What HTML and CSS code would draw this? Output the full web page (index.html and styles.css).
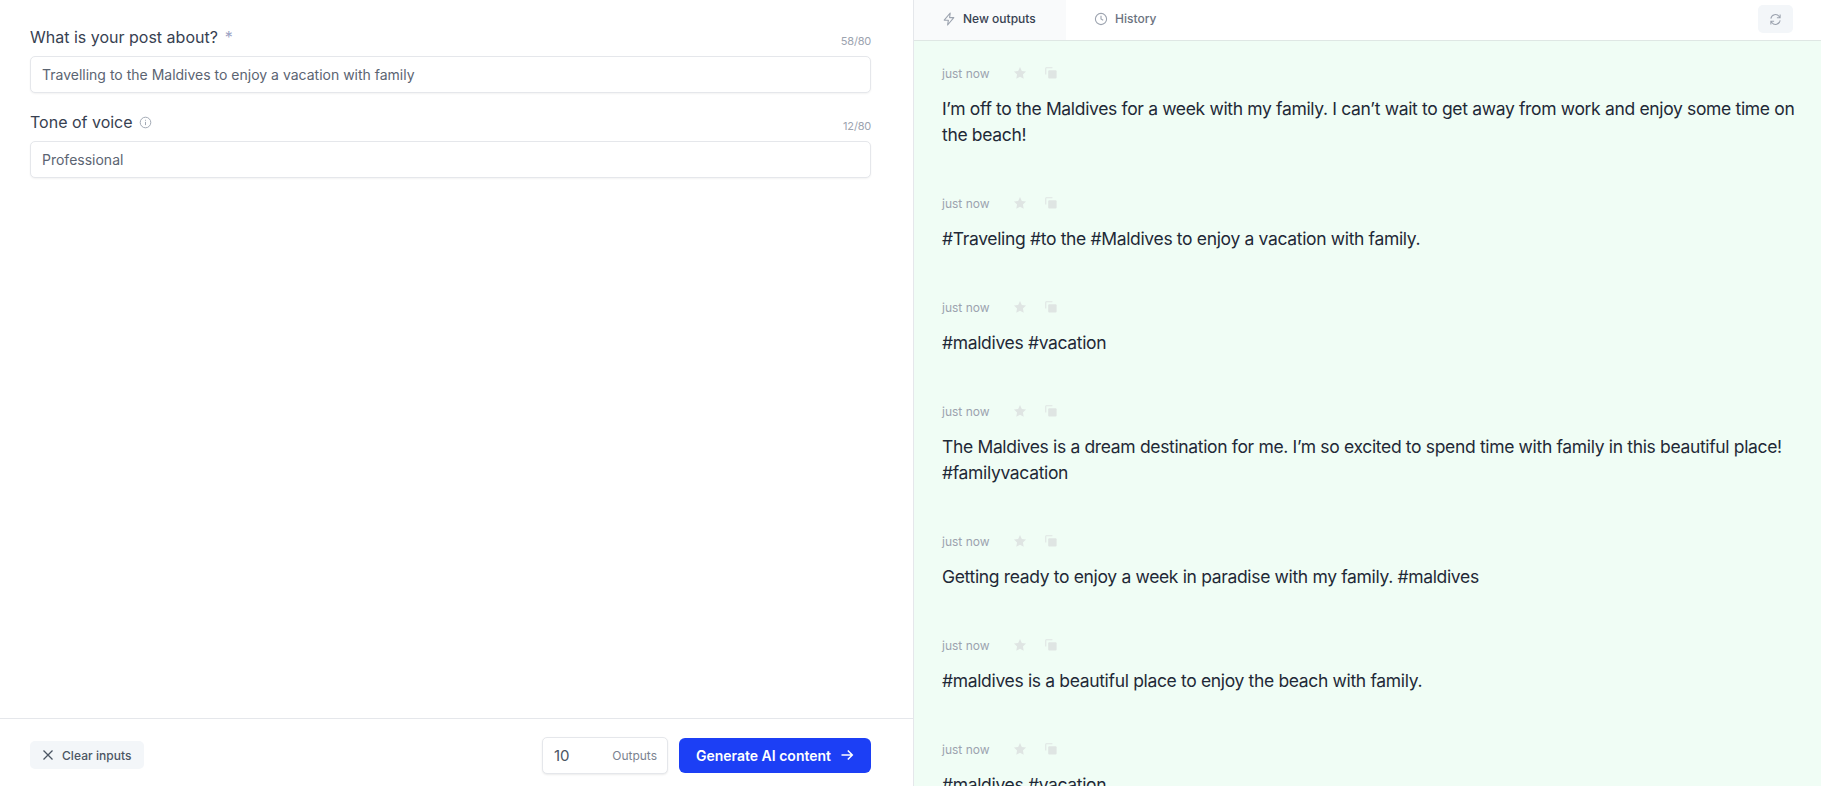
FILE: index.html
```html
<!DOCTYPE html>
<html>
<head>
<meta name="viewport" content="width=device-width, initial-scale=1">
<title>Post generator</title>
<link rel="stylesheet" href="styles.css">
</head>
<body>

<svg class="icon-defs" width="0" height="0" xmlns="http://www.w3.org/2000/svg">
  <symbol id="star" viewBox="0 0 20 20">
    <path d="M10 1.600l2.600 5.500 6 .8-4.400 4.200 1.100 6L10 15.200l-5.300 2.900 1.100-6L1.400 7.900l6-.8z" fill="currentColor"/>
  </symbol>
  <symbol id="copy" viewBox="0 0 20 20">
    <path d="M2.500 12V3.500a1 1 0 0 1 1-1H12" fill="none" stroke="currentColor" stroke-width="1.500"/>
    <rect x="6" y="6" width="12" height="12" rx="1.500" fill="currentColor"/>
  </symbol>
</svg>

<main class="page">

  <section class="editor">
    <div class="fields">
      <div class="field">
        <div class="field__head">
          <label class="field__label">What is your post about? <span class="field__req">*</span></label>
          <span class="field__count">58/80</span>
        </div>
        <input class="field__input" type="text" value="Travelling to the Maldives to enjoy a vacation with family">
      </div>
      <div class="field">
        <div class="field__head">
          <label class="field__label">Tone of voice
            <svg class="field__info" viewBox="0 0 14 14" width="13" height="13" xmlns="http://www.w3.org/2000/svg">
              <circle cx="7" cy="7" r="5.700" fill="none" stroke="currentColor" stroke-width="1"/>
              <path d="M7 6.300v3.500M7 4.100v1" fill="none" stroke="currentColor" stroke-width="1"/>
            </svg>
          </label>
          <span class="field__count">12/80</span>
        </div>
        <input class="field__input" type="text" value="Professional">
      </div>
    </div>

    <footer class="actions">
      <button class="btn-clear" type="button">
        <svg viewBox="0 0 12 12" width="12" height="12" xmlns="http://www.w3.org/2000/svg">
          <path d="M1.500 1.500l9 9M10.500 1.500l-9 9" fill="none" stroke="currentColor" stroke-width="1.300"/>
        </svg>
        Clear inputs
      </button>
      <div class="actions__right">
        <div class="outputs">
          <span class="outputs__num">10</span>
          <span class="outputs__label">Outputs</span>
        </div>
        <button class="btn-generate" type="button">
          Generate AI content
          <svg viewBox="0 0 14 14" width="14" height="14" xmlns="http://www.w3.org/2000/svg">
            <path d="M1.500 7h10.500M7.800 2.500L12.300 7l-4.500 4.500" fill="none" stroke="currentColor" stroke-width="1.500"/>
          </svg>
        </button>
      </div>
    </footer>
  </section>

  <section class="results">
    <header class="tabs">
      <div class="tab tab--active">
        <svg viewBox="0 0 14 14" width="14" height="14" xmlns="http://www.w3.org/2000/svg">
          <path d="M8.200 1L2.200 8.200h4.200L5.600 13l6.200-7.400H7.600z" fill="none" stroke="currentColor" stroke-width="1.100" stroke-linejoin="round"/>
        </svg>
        New outputs
      </div>
      <div class="tab">
        <svg viewBox="0 0 14 14" width="14" height="14" xmlns="http://www.w3.org/2000/svg">
          <circle cx="7" cy="7" r="5.600" fill="none" stroke="currentColor" stroke-width="1.100"/>
          <path d="M7 3.700V7l2.200 1.300" fill="none" stroke="currentColor" stroke-width="1.100"/>
        </svg>
        History
      </div>
      <button class="btn-refresh" type="button">
        <svg viewBox="0 0 14 14" width="13" height="13" xmlns="http://www.w3.org/2000/svg">
          <path d="M2 6a5 5 0 0 1 9-2.200l1 1.200M12 8a5 5 0 0 1-9 2.200L2 9M12 1.500V5H8.500M2 12.500V9h3.500" fill="none" stroke="currentColor" stroke-width="1.100"/>
        </svg>
      </button>
    </header>

    <div class="list">
      <article class="output">
        <div class="output__meta"><span class="output__time">just now</span><svg class="output__icon"><use href="#star"/></svg><svg class="output__icon"><use href="#copy"/></svg></div>
        <p class="output__text">I’m off to the Maldives for a week with my family. I can’t wait to get away from work and enjoy some time on the beach!</p>
      </article>
      <article class="output">
        <div class="output__meta"><span class="output__time">just now</span><svg class="output__icon"><use href="#star"/></svg><svg class="output__icon"><use href="#copy"/></svg></div>
        <p class="output__text">#Traveling #to the #Maldives to enjoy a vacation with family.</p>
      </article>
      <article class="output">
        <div class="output__meta"><span class="output__time">just now</span><svg class="output__icon"><use href="#star"/></svg><svg class="output__icon"><use href="#copy"/></svg></div>
        <p class="output__text">#maldives #vacation</p>
      </article>
      <article class="output">
        <div class="output__meta"><span class="output__time">just now</span><svg class="output__icon"><use href="#star"/></svg><svg class="output__icon"><use href="#copy"/></svg></div>
        <p class="output__text">The Maldives is a dream destination for me. I’m so excited to spend time with family in this beautiful place! #familyvacation</p>
      </article>
      <article class="output">
        <div class="output__meta"><span class="output__time">just now</span><svg class="output__icon"><use href="#star"/></svg><svg class="output__icon"><use href="#copy"/></svg></div>
        <p class="output__text">Getting ready to enjoy a week in paradise with my family. #maldives</p>
      </article>
      <article class="output">
        <div class="output__meta"><span class="output__time">just now</span><svg class="output__icon"><use href="#star"/></svg><svg class="output__icon"><use href="#copy"/></svg></div>
        <p class="output__text">#maldives is a beautiful place to enjoy the beach with family.</p>
      </article>
      <article class="output">
        <div class="output__meta"><span class="output__time">just now</span><svg class="output__icon"><use href="#star"/></svg><svg class="output__icon"><use href="#copy"/></svg></div>
        <p class="output__text">#maldives #vacation</p>
      </article>
    </div>
  </section>

</main>

</body>
</html>
```

FILE: styles.css
```css
* {box-sizing: border-box;}

html, body {
  height: 100%;
}

body {
  margin: 0;
  overflow: hidden;
  font-family: Inter, "Liberation Sans", sans-serif;
  color: #1f2937;
  background: white;
}

.icon-defs {
  position: absolute;
}

.page {
  display: flex;
  height: 786px;
}

/* left side */
.editor {
  display: flex;
  flex-direction: column;
  width: 914px;
  flex: none;
  border-right: 1px solid #e5e7eb;
}

.fields {
  flex: 1;
  padding: 26px 42px 0 30px;
}

.field {
  margin-bottom: 18px;
}

.field__head {
  display: flex;
  justify-content: space-between;
  align-items: flex-end;
  height: 30px;
  padding-bottom: 8px;
}

.field__label {
  display: flex;
  align-items: center;
  gap: 7px;
  height: 22px;
  font-size: 16px;
  color: #374151;
}

.field__req {
  color: #9ca3c4;
  font-size: 16px;
}

.field__info {
  color: #9ca3af;
  margin-left: -1px;
}

.field__count {
  font-size: 11px;
  letter-spacing: -.2px;
  color: #9ca3af;
  line-height: 14px;
}

.field__input {
  display: block;
  width: 100%;
  height: 37px;
  padding: 0 11px;
  font: 14px Inter, "Liberation Sans", sans-serif;
  color: #5b6472;
  background: white;
  border: 1px solid #e5e7eb;
  border-radius: 5px;
  box-shadow: 0 1px 2px rgba(0, 0, 0, .05);
  outline: none;
}

.actions {
  display: flex;
  justify-content: space-between;
  align-items: center;
  height: 68px;
  padding: 5px 42px 0 30px;
  border-top: 1px solid #e5e7eb;
}

.actions__right {
  display: flex;
  align-items: center;
  gap: 11px;
}

.btn-clear {
  display: flex;
  align-items: center;
  gap: 8px;
  height: 28px;
  width: 114px;
  padding: 0 0 0 12px;
  font: 500 12px Inter, "Liberation Sans", sans-serif;
  letter-spacing: .05px;
  color: #4b5563;
  background: #f3f6f9;
  border: none;
  border-radius: 5px;
}

.outputs {
  display: flex;
  justify-content: space-between;
  align-items: center;
  width: 126px;
  height: 37px;
  padding: 0 10px 0 11px;
  background: white;
  border: 1px solid #e5e7eb;
  border-radius: 5px;
  box-shadow: 0 1px 2px rgba(0, 0, 0, .08);
}

.outputs__num {
  font-size: 15px;
  color: #4b5563;
}

.outputs__label {
  font-size: 12px;
  color: #7b8390;
}

.btn-generate {
  display: flex;
  align-items: center;
  justify-content: center;
  gap: 9px;
  width: 192px;
  height: 35px;
  font: 600 14px Inter, "Liberation Sans", sans-serif;
  color: white;
  background: #1c3ff5;
  border: none;
  border-radius: 6px;
}

/* right side */
.results {
  flex: 1;
  min-width: 0;
  display: flex;
  flex-direction: column;
  background: #f0fdf5;
}

.tabs {
  display: flex;
  align-items: stretch;
  flex: none;
  height: 41px;
  padding-right: 28px;
  background: white;
  border-bottom: 1px solid #dfe7e4;
}

.tab {
  display: flex;
  align-items: center;
  gap: 7px;
  padding: 0 28px 3px;
  font-size: 12px;
  font-weight: 500;
  color: #6b7280;
}

.tab svg {
  color: #9ca3af;
}

.tab--active {
  width: 152px;
  color: #374151;
  background: #f9fafb;
}

.btn-refresh {
  display: flex;
  align-items: center;
  justify-content: center;
  margin: 5px 0 0 auto;
  width: 35px;
  height: 28px;
  padding: 0;
  color: #9ca3af;
  background: #f3f6f9;
  border: none;
  border-radius: 5px;
}

.list {
  flex: 1;
  overflow: hidden;
  padding: 23px 18px 0 28px;
}

.output {
  margin-bottom: 46px;
}

.output__meta {
  display: flex;
  align-items: center;
  height: 18px;
  margin-bottom: 14px;
}

.output__time {
  width: 71px;
  font-size: 12px;
  color: #9ca3af;
}

.output__icon {
  width: 14px;
  height: 14px;
  margin-right: 17px;
  color: #dfe5e3;
}

.output__text {
  margin: 0;
  font-size: 17.500px;
  letter-spacing: -.34px;
  line-height: 26px;
  color: #1f2937;
}
```
